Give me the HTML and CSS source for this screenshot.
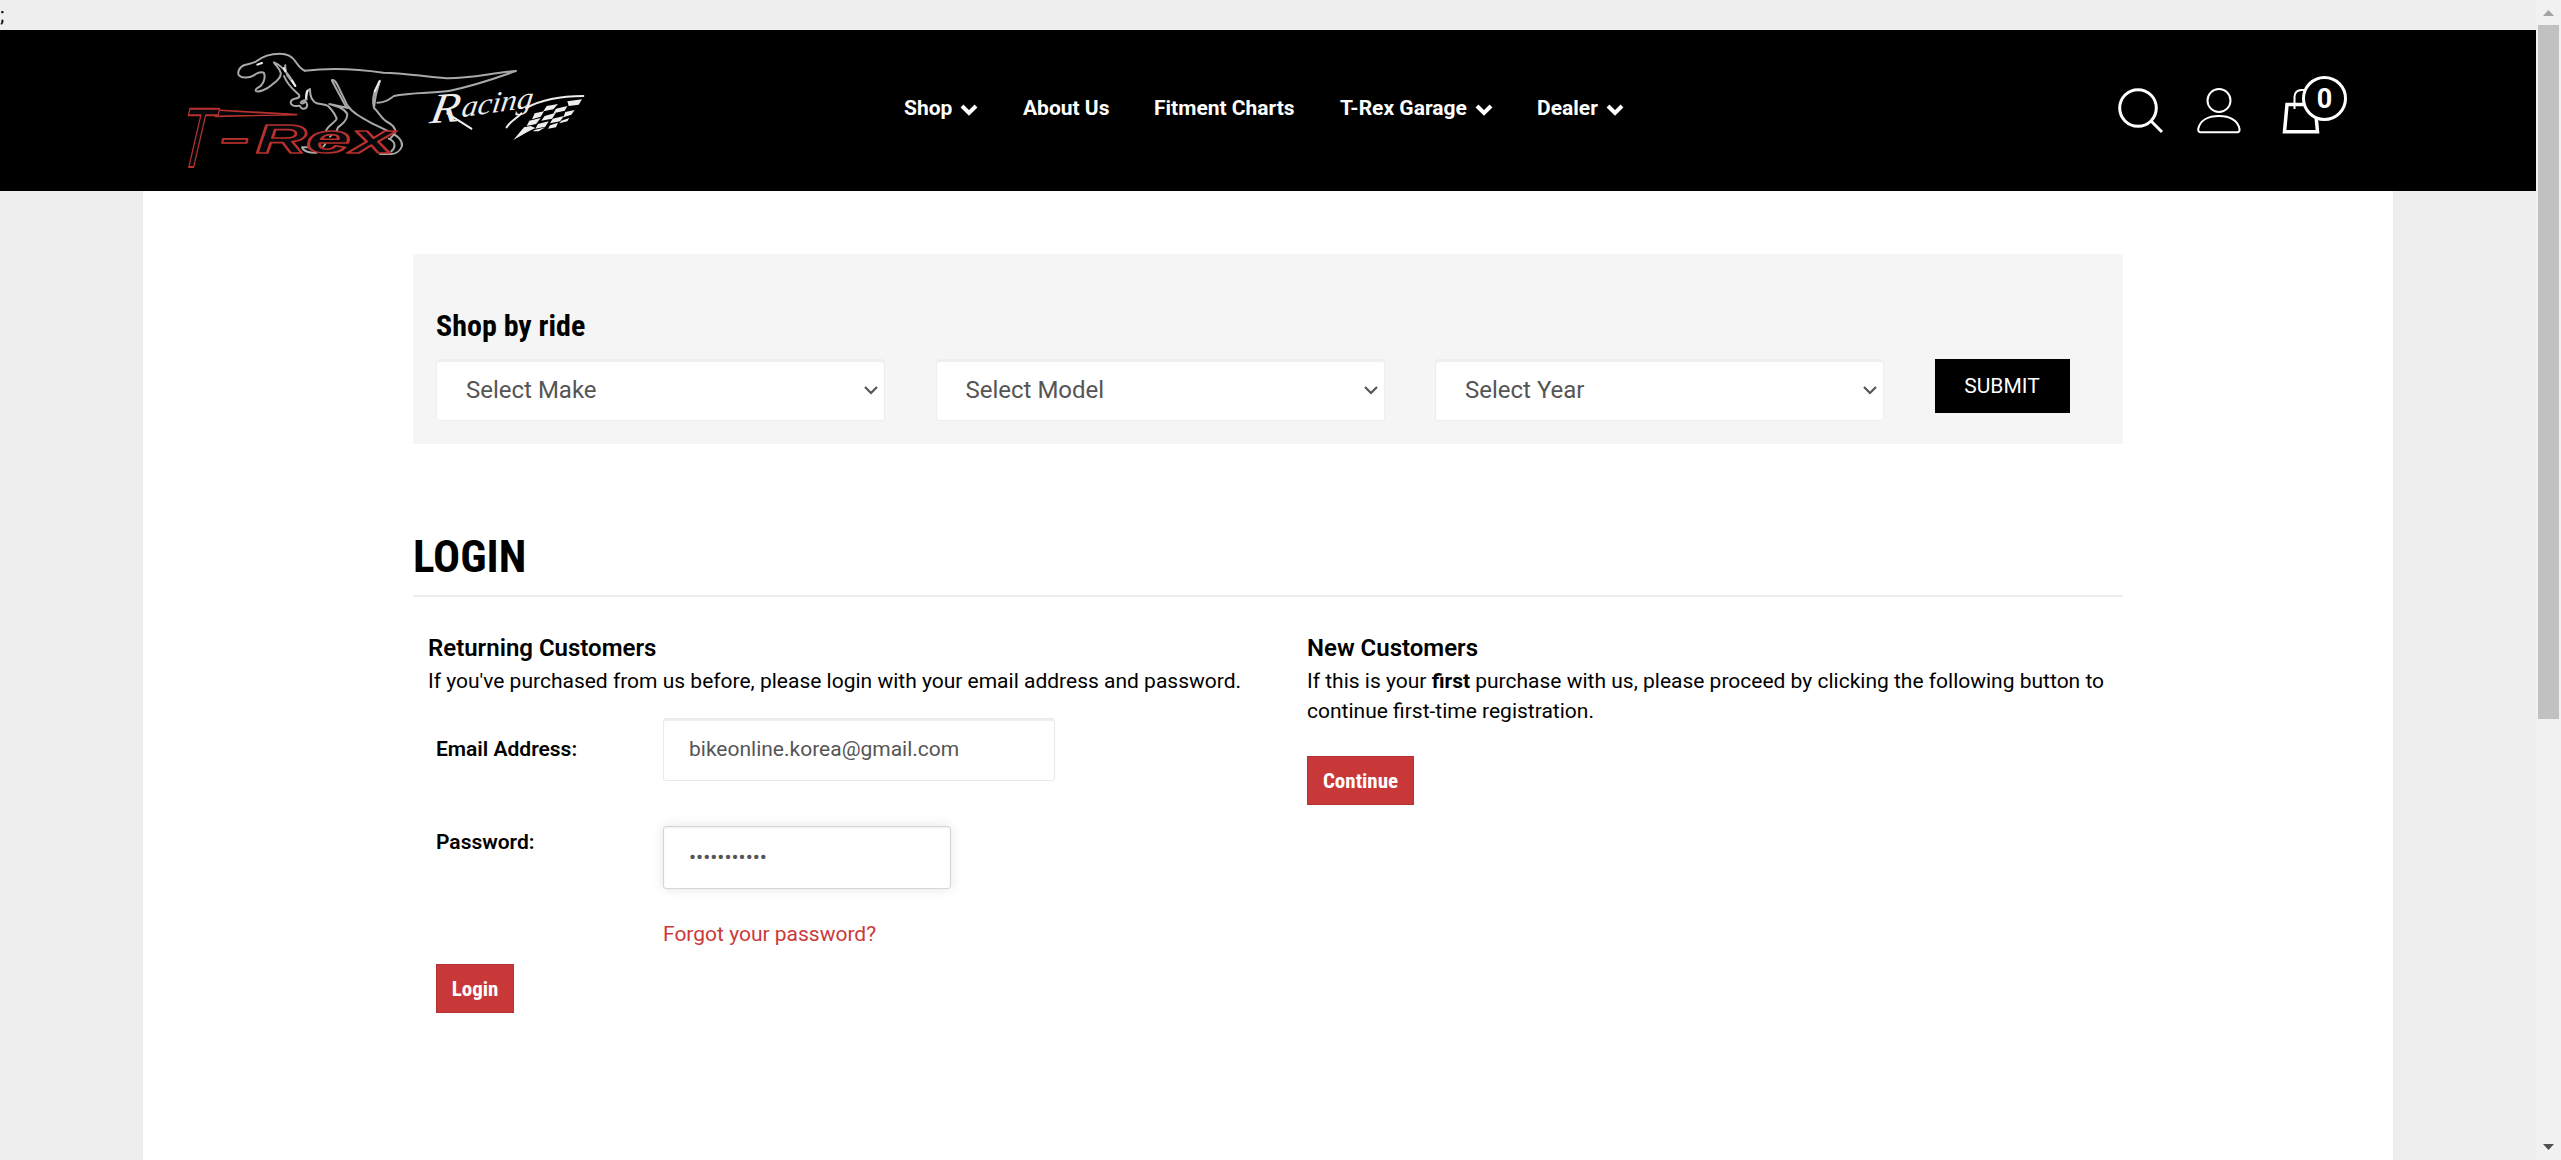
FILE: index.html
```html
<!DOCTYPE html>
<html lang="en">
<head>
<meta charset="utf-8">
<title>T-Rex Racing - Login</title>
<link rel="stylesheet" href="styles.css">
</head>
<body>
<div class="page">
  <div class="stray">;</div>
  <header class="header">
    <a class="logo">
      <svg viewBox="0 0 1290 420" width="430" height="140" fill="none" stroke-linejoin="round" stroke-linecap="round">
        <g stroke="#a9a9a9" stroke-width="6">
          <path d="M404 92C390 86 384 76 376 64C366 48 352 41 330 41C305 41 276 50 259 64C248 70 236 72 224 75C208 80 201 98 207 106C216 116 240 113 250 107C262 98 276 94 282 99C286 112 281 128 272 138C262 144 255 148 257 152C266 159 290 148 306 134C326 120 334 108 332 98C328 84 316 76 312 67C330 74 346 92 356 106C364 118 372 128 376 138L352 106C346 92 344 86 346 76"/>
          <path d="M342 108C350 128 366 146 382 160C392 168 390 174 374 176C360 180 358 192 370 197C376 200 386 196 390 198C392 206 400 208 408 204C414 196 410 188 406 184C400 192 396 192 392 188C396 180 404 182 410 178C406 164 410 152 420 147"/>
          <path d="M404 92C470 84 560 86 640 98C700 98 760 110 830 115C900 116 960 100 1038 93C980 114 920 136 840 152C800 160 720 156 672 168C660 176 650 188 622 188"/>
          <path d="M420 150C420 170 424 182 440 190C456 194 466 192 474 198C486 210 496 224 500 236C498 246 476 254 468 272"/>
          <path d="M486 120C494 118 500 130 506 142L532 196C550 222 584 238 614 254L664 278C684 290 698 300 696 318C690 336 674 344 656 342H630"/>
          <path d="M486 122L528 200M478 192C504 200 524 206 532 222C532 240 520 250 504 262L500 272M478 192L534 204"/>
          <path d="M630 122C626 134 624 144 620 156C616 170 614 188 612 204C626 216 636 238 652 246C668 254 676 266 676 276C672 286 666 290 662 294M612 204C606 180 610 162 618 146"/>
          <path d="M656 296C680 306 676 324 664 334M396 322C400 334 420 340 440 338M396 322H420M460 320L466 312M480 290L484 286"/>
        </g>
        <path d="M262 74L276 69M342 84L346 94M628 124L614 154M366 122L376 138M412 152L408 174" stroke="#eee" stroke-width="6"/>
        <g class="logo-red">
          <path d="M138 210L380 224L136 229Z"/>
          <text class="logo-t" transform="translate(16 382) skewX(-13) scale(.62 1)" x="0" y="0">T</text>
          <text class="logo-rex" x="153" y="337" textLength="82" lengthAdjust="spacingAndGlyphs">–</text>
          <text class="logo-rex" x="258" y="338" textLength="152" lengthAdjust="spacingAndGlyphs">R</text>
          <text class="logo-rex" x="408" y="338" textLength="134" lengthAdjust="spacingAndGlyphs">e</text>
          <text class="logo-rex" x="542" y="338" textLength="130" lengthAdjust="spacingAndGlyphs">x</text>
        </g>
        <g class="logo-racing">
          <text class="logo-r" transform="translate(776 250) rotate(-4) skewX(-14)" textLength="88" lengthAdjust="spacingAndGlyphs">R</text>
          <text class="logo-acing" transform="translate(872 232) rotate(-8) skewX(-16)" textLength="216" lengthAdjust="spacingAndGlyphs">acing</text>
        </g>
        <path d="M1068 204C1120 176 1180 168 1240 168M832 220L904 266M1054 220C1040 236 1020 244 1010 262" stroke="#eee" stroke-width="6"/>
        <g fill="#eee">
          <path d="M1130 198l34-6-14 16-30 6zM1192 184l44-6-10 16-30 4zM1158 206l34-8-8 14-34 8zM1094 220l28-6-10 16-26 8zM1124 228l34-10-12 18-32 6zM1186 216l28-6-10 14-24 8zM1078 242l34-8-14 18-28 6zM1148 236l34-8-12 16-30 6zM1174 242l24-8-6 10-24 6zM1104 252l32-8-10 16-30 6zM1062 262l20-4 14 6-24 12-42 24zM1094 270l32-8-20 12-18 0zM1140 256l24-8-6 14-24 4z"/>
        </g>
      </svg>
    </a>
    <nav class="nav">
      <a class="n1">Shop<svg class="chev" viewBox="0 0 18 12"><path d="M2 2L9 9L16 2"/></svg></a>
      <a class="n2">About Us</a>
      <a class="n3">Fitment Charts</a>
      <a class="n4">T-Rex Garage<svg class="chev" viewBox="0 0 18 12"><path d="M2 2L9 9L16 2"/></svg></a>
      <a class="n5">Dealer<svg class="chev" viewBox="0 0 18 12"><path d="M2 2L9 9L16 2"/></svg></a>
    </nav>
    <div class="tools">
      <svg width="46" height="46" viewBox="0 0 46 46" fill="none" stroke="#fff" stroke-width="3"><circle cx="20" cy="20" r="18.3"/><path d="M33 33L44 44"/></svg>
      <svg width="44" height="46" viewBox="0 0 44 46" fill="none" stroke="#fff" stroke-width="2"><circle cx="22" cy="12.500" r="11.500"/><path d="M4 44.200H40Q43 44 42.500 41C41 32.500 33 28 22 28S3 32.500 1.200 41Q1 44 4 44.200Z"/></svg>
      <div class="cart">
        <svg width="38" height="46" viewBox="0 0 38 46" fill="none" stroke="#fff"><path d="M12.500 21V8.500Q13 2.200 19.500 2H24V21" stroke-width="2"/><path d="M5 16.500H33L35.500 43.800H2.500Z" stroke-width="3.500"/></svg>
        <span class="badge">0</span>
      </div>
    </div>
  </header>
  <main class="main">
    <section class="ride">
      <h3 class="ride-title">Shop by ride</h3>
      <div class="ride-row">
        <div class="select">Select Make<svg class="arrow" viewBox="0 0 14 9"><path d="M1 1L7 7L13 1"/></svg></div>
        <div class="select">Select Model<svg class="arrow" viewBox="0 0 14 9"><path d="M1 1L7 7L13 1"/></svg></div>
        <div class="select">Select Year<svg class="arrow" viewBox="0 0 14 9"><path d="M1 1L7 7L13 1"/></svg></div>
        <button class="submit">SUBMIT</button>
      </div>
    </section>
    <h1 class="title">LOGIN</h1>
    <div class="columns">
      <section class="returning">
        <h4 class="sub">Returning Customers</h4>
        <p class="text">If you've purchased from us before, please login with your email address and password.</p>
        <div class="form">
          <label class="label">Email Address:</label>
          <div class="field email">bikeonline.korea@gmail.com</div>
          <label class="label pw-label">Password:</label>
          <div class="field password">•••••••••••</div>
          <a class="forgot">Forgot your password?</a>
        </div>
        <button class="btn login">Login</button>
      </section>
      <section class="new">
        <h4 class="sub">New Customers</h4>
        <p class="text">If this is your <b>first</b> purchase with us, please proceed by clicking the following button to continue first-time registration.</p>
        <button class="btn continue">Continue</button>
      </section>
    </div>
  </main>
</div>
<div class="scrollbar">
  <svg width="11" height="6" viewBox="0 0 11 6"><path d="M0 6L5.500 0L11 6Z" fill="#a3a3a3"/></svg>
  <div class="thumb"></div>
  <svg width="11" height="6" viewBox="0 0 11 6"><path d="M0 0L5.500 6L11 0Z" fill="#505050"/></svg>
</div>
</body>
</html>
```
FILE: styles.css
```css
* { box-sizing: border-box; }
body {
  margin: 0;
  width: 2561px;
  height: 1160px;
  overflow: hidden;
  display: flex;
  background: #eee;
  color: #000;
  font: 21px/30px Roboto, sans-serif;
}
h1, h3, h4, p { margin: 0; }
.page { width: 2536px; height: 1160px; display: flex; flex-direction: column; }
.stray { height: 30px; line-height: 30px; }
.header {
  height: 161px;
  background: #000;
  color: #fff;
  display: flex;
  align-items: flex-start;
  padding-left: 170px;
}
.logo { width: 430px; margin-top: 10px; }
.logo svg { display: block; }
.logo-red { fill: #05090b; stroke: #b9302d; stroke-width: 5; }
.logo-t { font: 254px "Liberation Sans", sans-serif; stroke-width: 6; }
.logo-rex { font: italic bold 124px "Liberation Sans", sans-serif; }
.logo-racing { fill: #eee; }
.logo-r { font: italic 126px "Liberation Serif", serif; }
.logo-acing { font: italic 88px "Liberation Serif", serif; }
.nav {
  margin: 63px 0 0 304px;
  width: 740px;
  display: flex;
  font-weight: 700;
  white-space: nowrap;
}
.nav a { flex: none; }
.n1 { width: 119px; }
.n2 { width: 131px; }
.n3 { width: 186px; }
.n4 { width: 197px; }
.chev { width: 18px; height: 12px; margin-left: 8px; fill: none; stroke: #fff; stroke-width: 4; position: relative; top: 1px; }
.tools { display: flex; margin: 58px 0 0 474px; }
.tools svg { display: block; flex: none; }
.tools > svg + svg { margin-left: 33px; }
.cart { display: flex; margin-left: 41px; position: relative; }
.badge {
  position: absolute;
  left: 20px;
  top: -12px;
  width: 45px;
  height: 45px;
  border: 3px solid #fff;
  border-radius: 50%;
  background: #000;
  text-align: center;
  font: 700 27px/41px Roboto, sans-serif;
}
.main { width: 2250px; flex: 1; margin-left: 143px; padding: 63px 270px 0; background: #fff; }
.ride { height: 190px; background: #f5f5f5; padding: 50px 23px 0; }
.ride-title, .title, .btn { font-family: "Roboto Condensed", Roboto, sans-serif; font-stretch: 75%; }
.ride-title { font-size: 30px; line-height: 44px; height: 55px; font-weight: 700; }
.ride-row { display: flex; align-items: flex-start; }
.select {
  width: 449px;
  height: 62px;
  margin-right: 50.5px;
  padding: 0 6px 0 29px;
  display: flex;
  align-items: center;
  justify-content: space-between;
  background: #fff;
  border: 1px solid #eee;
  border-radius: 3px;
  box-shadow: inset 0 2px 1px #eee;
  color: #555;
  font-size: 24px;
}
.arrow { width: 14px; height: 9px; fill: none; stroke: #555; stroke-width: 2.2; }
.submit { width: 135px; height: 54px; margin: 0; padding: 0; border: 0; background: #000; color: #fff; font: 21px Roboto, sans-serif; }
.title { margin-top: 83px; height: 70px; line-height: 60px; font-size: 45px; font-weight: 700; border-bottom: 2px solid #eee; }
.columns { display: flex; padding: 36px 0 0 15px; }
.returning { width: 879px; }
.sub { font-size: 24px; line-height: 30px; font-weight: 600; height: 33px; }
.text { line-height: 30px; }
.form {
  display: grid;
  grid-template-columns: 227px 1fr;
  grid-template-rows: 63px 63px;
  row-gap: 45px;
  margin: 22px 0 0 8px;
}
.label { font-weight: 600; line-height: 63px; }
.pw-label { line-height: 33px; }
.field {
  height: 63px;
  line-height: 61px;
  padding-left: 25px;
  border: 1px solid #e9e9e9;
  border-radius: 3px;
  box-shadow: inset 0 2px 1px #eee;
  color: #555;
}
.email { width: 392px; }
.password { width: 288px; border-color: #d5d5d5; box-shadow: 0 0 12px #e5e5e5, inset 0 1px 2px #eee; }
.forgot { grid-column: 2; margin-top: -15px; color: #cb3a3a; }
.btn {
  display: block;
  height: 49px;
  padding: 0;
  border: 1px solid #b23333;
  background: #c93838;
  color: #fff;
  font-size: 21px;
  font-weight: 700;
}
.login { width: 78px; margin: 15px 0 0 8px; }
.continue { width: 107px; margin-top: 30px; }
.new { width: 815px; }
.scrollbar {
  width: 25px;
  height: 1160px;
  background: #f1f1f1;
  display: flex;
  flex-direction: column;
  align-items: center;
  padding: 10px 0 10px;
}
.thumb { width: 21px; height: 694px; margin: 9px 0 auto; background: #c1c1c1; }
```
